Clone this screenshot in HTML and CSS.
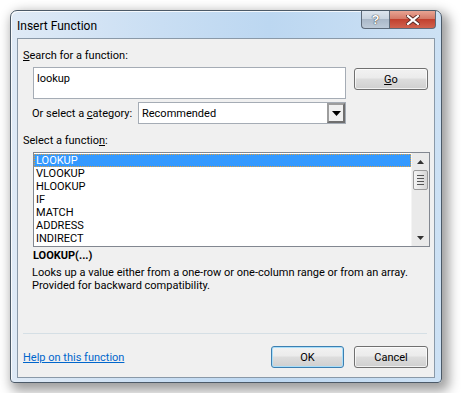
FILE: index.html
```html
<!DOCTYPE html>
<html>
<head>
<meta charset="utf-8">
<link rel="stylesheet" href="styles.css">
</head>
<body>
<div class="window">
  <div class="titlebar">
    <span class="title">Insert Function</span>
    <div class="caption">
      <div class="cbtn help"><span>?</span></div>
      <div class="cbtn close">
        <svg width="14" height="10" viewBox="0 0 14 10"><path d="M2 1 L12 9 M12 1 L2 9" stroke="#5a2a25" stroke-width="4" stroke-linecap="square"/><path d="M2 1 L12 9 M12 1 L2 9" stroke="#fff" stroke-width="2.2" stroke-linecap="square"/></svg>
      </div>
    </div>
  </div>
  <div class="client">
    <div class="label l1"><u>S</u>earch for a function:</div>
    <div class="search-row">
      <div class="input">lookup</div>
      <div class="button go"><u>G</u>o</div>
    </div>
    <div class="cat-row">
      <span class="label">Or select a <u>c</u>ategory:</span>
      <div class="select">
        <span>Recommended</span>
        <div class="arrow"><svg width="9" height="5" viewBox="0 0 9 5"><path d="M0 0 H9 L4.5 5 Z" fill="#000"/></svg></div>
      </div>
    </div>
    <div class="label l2">Select a functio<u>n</u>:</div>
    <div class="listbox">
      <div class="items">
        <div class="item sel">LOOKUP</div>
        <div class="item">VLOOKUP</div>
        <div class="item">HLOOKUP</div>
        <div class="item">IF</div>
        <div class="item">MATCH</div>
        <div class="item">ADDRESS</div>
        <div class="item">INDIRECT</div>
      </div>
      <div class="scrollbar">
        <div class="sarrow"><svg width="7" height="4" viewBox="0 0 7 4"><path d="M3.5 0 L7 4 H0 Z" fill="#333"/></svg></div>
        <div class="thumb"><i></i><i></i><i></i><i></i></div>
        <div class="track"></div>
        <div class="sarrow"><svg width="7" height="4" viewBox="0 0 7 4"><path d="M0 0 H7 L3.5 4 Z" fill="#333"/></svg></div>
      </div>
    </div>
    <div class="fname">LOOKUP(...)</div>
    <div class="desc">Looks up a value either from a one-row or one-column range or from an array.<br>Provided for backward compatibility.</div>
    <div class="sep"></div>
    <div class="bottom-row">
      <a class="help-link">Help on this function</a>
      <div class="button ok">OK</div>
      <div class="button cancel">Cancel</div>
    </div>
  </div>
</div>
</body>
</html>
```

FILE: styles.css
```css
html, body { margin: 0; padding: 0; background: #ffffff; }
body { padding: 10px; font-family: Roboto, "Liberation Sans", Arial, sans-serif; font-size: 11px; color: #000; }
u { text-decoration: underline; text-underline-offset: 1px; }

.window {
  width: 432px;
  height: 373px;
  box-sizing: border-box;
  border: 1px solid #4c5a68;
  border-radius: 7px 7px 4px 4px;
  background: linear-gradient(to right, #dfeaf6 0%, #c9def3 35%, #bcd7f1 60%, #cde1f4 100%);
  box-shadow: 4px 5px 12px 3px rgba(0,0,0,0.38), inset 1px 1px 0 rgba(255,255,255,0.8);
  padding: 0 6px 4px 6px;
  display: flex;
  flex-direction: column;
}

.titlebar {
  height: 27px;
  display: flex;
  align-items: flex-start;
  justify-content: space-between;
  flex-shrink: 0;
}
.title { margin-top: 8px; font-size: 12px; color: #000; }
.caption { display: flex; margin-right: -1px; }
.cbtn {
  height: 18px;
  box-sizing: border-box;
  border: 1px solid #5d6a79;
  border-top: none;
  display: flex; align-items: center; justify-content: center;
}
.help {
  width: 28px;
  border-radius: 0 0 0 4px;
  border-right: none;
  background: linear-gradient(#dde5ee 0%, #c9d4e0 45%, #aab8c8 50%, #bdcad8 100%);
  color: #fff; font-weight: bold; font-size: 13px; font-family: "Liberation Sans", Arial, sans-serif;
  text-shadow: 0 0 1px #333, 0 0 1px #333;
}
.close {
  width: 47px;
  border-radius: 0 0 4px 0;
  background: linear-gradient(#e8a493 0%, #d57a68 45%, #c2412f 50%, #d0624e 100%);
}

.client {
  flex: 1;
  border: 1px solid #8a99a8;
  background: #f0f0f0;
  padding: 0 6px 0 5px;
  display: flex;
  flex-direction: column;
}

.label { line-height: 15px; white-space: nowrap; }
.l1 { margin-top: 9px; }
.search-row { display: flex; margin-top: 4px; margin-left: 10px; }
.input {
  width: 313px; height: 32px; box-sizing: border-box;
  border: 1px solid #a5acb5; background: #fff;
  padding: 4px 0 0 3px; line-height: 14px;
}
.button {
  box-sizing: border-box;
  height: 22px;
  border: 1px solid #707070;
  border-radius: 3px;
  background: linear-gradient(#f2f2f2 0%, #ebebeb 45%, #dddddd 50%, #cfcfcf 100%);
  box-shadow: inset 0 0 0 1px rgba(255,255,255,0.7);
  display: flex; align-items: center; justify-content: center;
}
.go { width: 74px; margin-left: 8px; margin-top: 1px; }

.cat-row {
  display: flex; align-items: center; justify-content: space-between;
  margin-top: 3px; margin-left: 9px; width: 314px;
}
.select {
  width: 208px; height: 22px; box-sizing: border-box;
  border: 1px solid #a5acb5; background: #fff;
  display: flex; align-items: center; justify-content: space-between;
  padding-left: 3px;
}
.arrow {
  width: 18px; height: 20px; box-sizing: border-box;
  border: 2px solid #9d9d9d;
  border-right-color: #6f6f6f; border-bottom-color: #6f6f6f;
  background: #f0f0f0;
  display: flex; align-items: center; justify-content: center;
}

.l2 { margin-top: 9px; }
.listbox {
  margin-top: 4px; margin-left: 10px;
  width: 397px; height: 95px; box-sizing: border-box;
  border: 1px solid #828790; background: #fff;
  display: flex;
}
.items { flex: 1; padding: 1px 0 0 0; }
.item { height: 13px; line-height: 13px; padding-left: 2px; }
.item.sel {
  background: #3399ff; color: #fff;
  outline: 1px dotted #e0a040; outline-offset: -1px;
}
.scrollbar {
  width: 17px; background: #eaeaea;
  display: flex; flex-direction: column; align-items: center;
  border-left: 1px solid #f4f4f4;
}
.sarrow { height: 17px; width: 17px; display: flex; align-items: center; justify-content: center; }
.thumb {
  width: 15px; height: 20px; box-sizing: border-box;
  border: 1px solid #9a9a9a; border-radius: 2px;
  background: linear-gradient(to right, #f3f3f3, #e6e6e6 50%, #d6d6d6);
  display: flex; flex-direction: column; align-items: center; justify-content: center; gap: 2px;
}
.thumb i { display: block; width: 7px; height: 1px; background: #555; }
.track { flex: 1; }

.fname { font-weight: bold; margin-top: 1px; line-height: 15px; margin-left: 10px; }
.desc { margin-top: 3px; line-height: 13px; margin-left: 9px; white-space: nowrap; }

.sep { margin-top: auto; height: 1px; background: #d5dfe5; margin-left: 0; margin-right: 1px; }
.bottom-row { display: flex; align-items: center; margin-top: 12px; margin-bottom: 9px; }
.help-link { color: #0066cc; text-decoration: underline; flex: 1; margin-top: 1px; }
.ok { width: 73px; border-color: #3c7fb1; box-shadow: inset 0 0 0 1px #a9def9; }
.cancel { width: 74px; margin-left: 10px; }
```
